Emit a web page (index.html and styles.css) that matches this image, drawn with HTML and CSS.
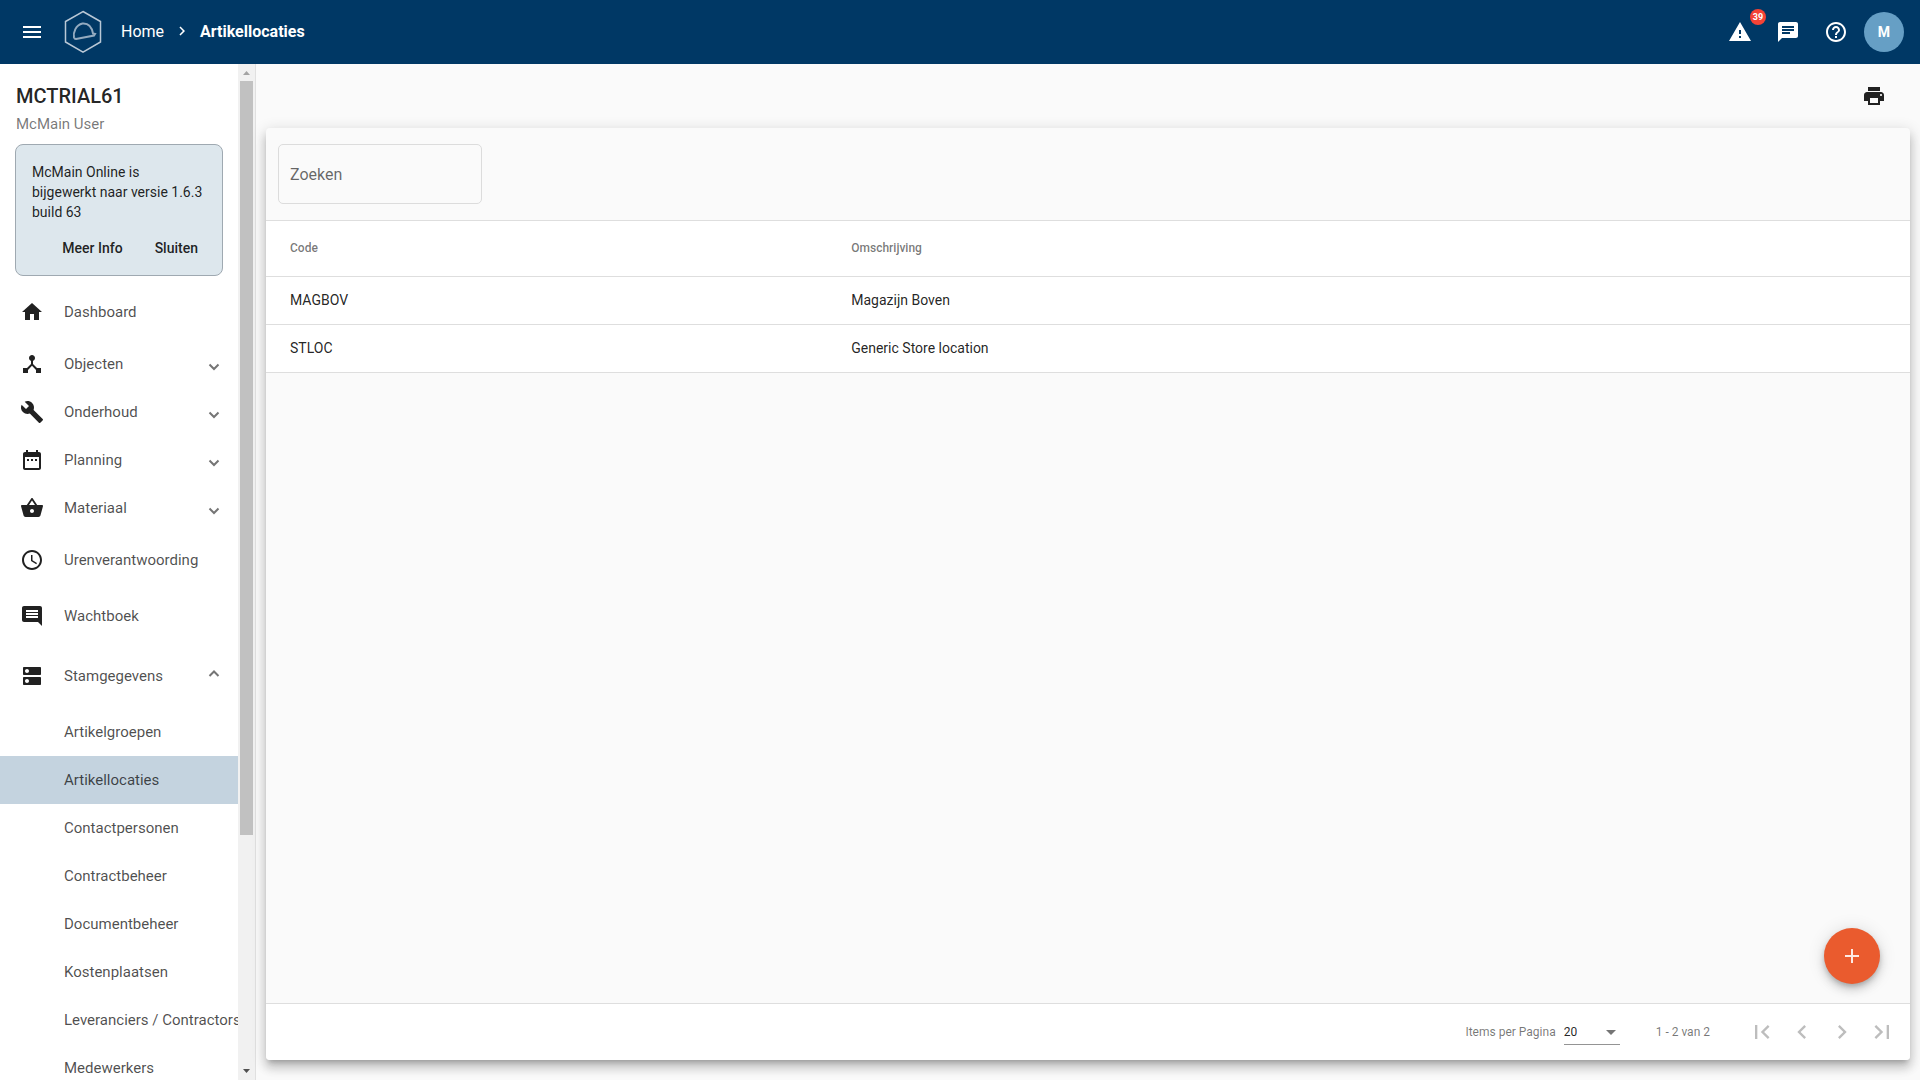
FILE: index.html
```html
<!DOCTYPE html>
<html lang="nl">
  <head>
    <meta charset="utf-8">
    <meta name="viewport" content="width=device-width, initial-scale=1">
    <title>Artikellocaties</title>
    <link rel="stylesheet" href="styles.css">
  </head>
  <body>
    <header class="topbar">
      <button class="icon-btn" type="button" aria-label="Menu">
        <svg class="icon" viewBox="0 0 24 24"><path d="M3 18h18v-2H3v2zm0-5h18v-2H3v2zm0-7v2h18V6H3z"/></svg>
      </button>
      <a class="logo" href="#" aria-label="McMain">
        <svg viewBox="0 0 38 44">
          <path d="M19 1.500L36.500 11.500V32L19 42.200L1.500 32V11.500Z"/>
          <path class="helmet" d="M10 27.500C9 23 11.500 15 18.500 13.500C25 13 28 18 29 23.500L31 24L30 25.500L12 29Q10.500 29 10 27.500Z"/>
        </svg>
      </a>
      <nav class="crumbs">
        <a href="#">Home</a>
        <svg class="icon crumb-sep" viewBox="0 0 24 24"><path d="M10 6L8.590 7.410 13.170 12l-4.580 4.590L10 18l6-6z"/></svg>
        <a class="current" href="#">Artikellocaties</a>
      </nav>
      <div class="actions">
        <button class="icon-btn" type="button" aria-label="Meldingen">
          <svg class="icon" viewBox="0 0 24 24"><path d="M1 21h22L12 2 1 21zm12-3h-2v-2h2v2zm0-4h-2v-4h2v4z"/></svg>
          <span class="badge">39</span>
        </button>
        <button class="icon-btn" type="button" aria-label="Berichten">
          <svg class="icon" viewBox="0 0 24 24"><path d="M20 2H4c-1.100 0-1.990.9-1.990 2L2 22l4-4h14c1.100 0 2-.9 2-2V4c0-1.100-.9-2-2-2zM6 9h12v2H6V9zm8 5H6v-2h8v2zm4-6H6V6h12v2z"/></svg>
        </button>
        <button class="icon-btn" type="button" aria-label="Help">
          <svg class="icon" viewBox="0 0 24 24"><path d="M11 18h2v-2h-2v2zm1-16C6.480 2 2 6.480 2 12s4.480 10 10 10 10-4.480 10-10S17.520 2 12 2zm0 18c-4.410 0-8-3.590-8-8s3.590-8 8-8 8 3.590 8 8-3.590 8-8 8zm0-14c-2.210 0-4 1.790-4 4h2c0-1.100.9-2 2-2s2 .9 2 2c0 2-3 1.750-3 5h2c0-2.250 3-2.500 3-5 0-2.210-1.790-4-4-4z"/></svg>
        </button>
        <button class="avatar" type="button">M</button>
      </div>
    </header>

    <div class="layout">
      <aside class="sidebar">
        <div class="side-content">
          <div class="user">
            <h1>MCTRIAL61</h1>
            <p>McMain User</p>
          </div>
          <div class="notice">
            <p>McMain Online is bijgewerkt naar versie 1.6.3 build 63</p>
            <div class="notice-actions">
              <button type="button">Meer Info</button>
              <button type="button">Sluiten</button>
            </div>
          </div>
          <nav class="menu">
            <a class="item tall" href="#">
              <svg class="icon" viewBox="0 0 24 24"><path d="M10 20v-6h4v6h5v-8h3L12 3 2 12h3v8z"/></svg>
              <span>Dashboard</span>
            </a>
            <a class="item" href="#">
              <svg class="icon" viewBox="0 0 24 24"><path d="M17 16l-4-4V8.820C14.160 8.400 15 7.300 15 6c0-1.660-1.340-3-3-3S9 4.340 9 6c0 1.300.84 2.400 2 2.820V12l-4 4H3v5h5v-3.050l4-4.200 4 4.200V21h5v-5h-4z"/></svg>
              <span>Objecten</span>
              <svg class="arrow" viewBox="0 0 12 12"><path d="M1.500 3.500L6 8l4.500-4.500"/></svg>
            </a>
            <a class="item" href="#">
              <svg class="icon" viewBox="0 0 24 24"><path d="M22.700 19l-9.100-9.100c.9-2.300.4-5-1.500-6.900-2-2-5-2.400-7.400-1.300L9 6 6 9 1.600 4.700C.4 7.100.9 10.100 2.900 12.100c1.900 1.900 4.600 2.400 6.900 1.500l9.100 9.100c.4.4 1 .4 1.400 0l2.300-2.300c.5-.4.5-1.100.1-1.400z"/></svg>
              <span>Onderhoud</span>
              <svg class="arrow" viewBox="0 0 12 12"><path d="M1.500 3.500L6 8l4.500-4.500"/></svg>
            </a>
            <a class="item" href="#">
              <svg class="icon" viewBox="0 0 24 24"><path d="M9 11H7v2h2v-2zm4 0h-2v2h2v-2zm4 0h-2v2h2v-2zm2-7h-1V2h-2v2H8V2H6v2H5c-1.110 0-1.990.9-1.990 2L3 20c0 1.100.89 2 2 2h14c1.100 0 2-.9 2-2V6c0-1.100-.9-2-2-2zm0 16H5V9h14v11z"/></svg>
              <span>Planning</span>
              <svg class="arrow" viewBox="0 0 12 12"><path d="M1.500 3.500L6 8l4.500-4.500"/></svg>
            </a>
            <a class="item" href="#">
              <svg class="icon" viewBox="0 0 24 24"><path d="M17.210 9l-4.380-6.560c-.19-.28-.51-.42-.83-.42-.32 0-.64.14-.83.430L6.790 9H2c-.55 0-1 .45-1 1 0 .09.010.18.040.270l2.540 9.270c.23.840 1 1.460 1.920 1.460h13c.92 0 1.690-.62 1.930-1.460l2.540-9.270L23 10c0-.55-.45-1-1-1h-4.790zM9 9l3-4.400L15 9H9zm3 8c-1.100 0-2-.9-2-2s.9-2 2-2 2 .9 2 2-.9 2-2 2z"/></svg>
              <span>Materiaal</span>
              <svg class="arrow" viewBox="0 0 12 12"><path d="M1.500 3.500L6 8l4.500-4.500"/></svg>
            </a>
            <a class="item tall" href="#">
              <svg class="icon" viewBox="0 0 24 24"><path d="M11.990 2C6.470 2 2 6.480 2 12s4.470 10 9.990 10C17.520 22 22 17.520 22 12S17.520 2 11.990 2zM12 20c-4.420 0-8-3.580-8-8s3.580-8 8-8 8 3.580 8 8-3.580 8-8 8z"/><path d="M12.500 7H11v6l5.250 3.150.75-1.230-4.500-2.670z"/></svg>
              <span>Urenverantwoording</span>
            </a>
            <a class="item tall" href="#">
              <svg class="icon" viewBox="0 0 24 24"><path d="M21.990 4c0-1.100-.89-2-1.990-2H4c-1.100 0-2 .9-2 2v12c0 1.100.9 2 2 2h14l4 4-.01-18zM18 14H6v-2h12v2zm0-3H6V9h12v2zm0-3H6V6h12v2z"/></svg>
              <span>Wachtboek</span>
            </a>
            <a class="item open" href="#">
              <svg class="icon" viewBox="0 0 24 24"><path d="M20 13H4c-.55 0-1 .45-1 1v6c0 .55.45 1 1 1h16c.55 0 1-.45 1-1v-6c0-.55-.45-1-1-1zM7 19c-1.100 0-2-.9-2-2s.9-2 2-2 2 .9 2 2-.9 2-2 2zM20 3H4c-.55 0-1 .45-1 1v6c0 .55.45 1 1 1h16c.55 0 1-.45 1-1V4c0-.55-.45-1-1-1zM7 9c-1.100 0-2-.9-2-2s.9-2 2-2 2 .9 2 2-.9 2-2 2z"/></svg>
              <span>Stamgegevens</span>
              <svg class="arrow" viewBox="0 0 12 12"><path d="M1.500 8L6 3.500 10.500 8"/></svg>
            </a>
            <a class="item sub" href="#">Artikelgroepen</a>
            <a class="item sub active" href="#">Artikellocaties</a>
            <a class="item sub" href="#">Contactpersonen</a>
            <a class="item sub" href="#">Contractbeheer</a>
            <a class="item sub" href="#">Documentbeheer</a>
            <a class="item sub" href="#">Kostenplaatsen</a>
            <a class="item sub" href="#">Leveranciers / Contractors</a>
            <a class="item sub" href="#">Medewerkers</a>
          </nav>
        </div>
        <div class="scrollbar" aria-hidden="true">
          <svg class="up" viewBox="0 0 17 17"><path d="M5 11h7L8.500 7z"/></svg>
          <div class="track"><div class="thumb"></div></div>
          <svg class="down" viewBox="0 0 17 17"><path d="M5 6h7L8.500 10z"/></svg>
        </div>
      </aside>

      <main class="main">
        <div class="toolbar">
          <button class="icon-btn" type="button" aria-label="Afdrukken">
            <svg class="icon" viewBox="0 0 24 24"><path d="M19 8H5c-1.660 0-3 1.340-3 3v6h4v4h12v-4h4v-6c0-1.660-1.340-3-3-3zm-3 11H8v-5h8v5zm3-7c-.55 0-1-.45-1-1s.45-1 1-1 1 .45 1 1-.45 1-1 1zm-1-9H6v4h12V3z"/></svg>
          </button>
        </div>
        <section class="card">
          <div class="filter">
            <input class="search" type="text" placeholder="Zoeken" aria-label="Zoeken">
          </div>
          <div class="table-area">
            <table>
              <thead>
                <tr><th>Code</th><th>Omschrijving</th></tr>
              </thead>
              <tbody>
                <tr><td>MAGBOV</td><td>Magazijn Boven</td></tr>
                <tr><td>STLOC</td><td>Generic Store location</td></tr>
              </tbody>
            </table>
            <button class="fab" type="button" aria-label="Toevoegen">
              <svg class="icon" viewBox="0 0 24 24"><path d="M19 13h-6v6h-2v-6H5v-2h6V5h2v6h6v2z"/></svg>
            </button>
          </div>
          <footer class="paginator">
            <label for="page-size">Items per Pagina</label>
            <div class="select">
              <select id="page-size">
                <option>20</option>
              </select>
              <svg class="caret" viewBox="0 0 10 5"><path d="M0 0h10L5 5z"/></svg>
            </div>
            <span class="range">1 - 2 van 2</span>
            <div class="pages">
              <button type="button" aria-label="Eerste pagina" disabled><svg viewBox="0 0 24 24"><path d="M18.410 16.590L13.820 12l4.590-4.590L17 6l-6 6 6 6zM6 6h2v12H6z"/></svg></button>
              <button type="button" aria-label="Vorige pagina" disabled><svg viewBox="0 0 24 24"><path d="M15.410 7.410L14 6l-6 6 6 6 1.410-1.410L10.830 12z"/></svg></button>
              <button type="button" aria-label="Volgende pagina" disabled><svg viewBox="0 0 24 24"><path d="M10 6L8.590 7.410 13.170 12l-4.580 4.590L10 18l6-6z"/></svg></button>
              <button type="button" aria-label="Laatste pagina" disabled><svg viewBox="0 0 24 24"><path d="M5.590 7.410L10.180 12l-4.590 4.590L7 18l6-6-6-6zM16 6h2v12h-2z"/></svg></button>
            </div>
          </footer>
        </section>
      </main>
    </div>
  </body>
</html>
```

FILE: styles.css
```css
* {
  box-sizing: border-box;
}
body {
  margin: 0;
  height: 100vh;
  display: flex;
  flex-direction: column;
  font-family: Roboto, "Liberation Sans", sans-serif;
  font-size: 14px;
  color: rgba(0, 0, 0, 0.87);
  background-color: #fafafa;
}
button {
  font-family: inherit;
  border: none;
  padding: 0;
  background: none;
  color: inherit;
  cursor: pointer;
}
a {
  color: inherit;
  text-decoration: none;
}
.icon {
  width: 24px;
  height: 24px;
  fill: currentColor;
  display: block;
  flex: none;
}

/* top bar */
.topbar {
  display: flex;
  align-items: center;
  height: 64px;
  flex: none;
  padding: 0 16px 0 12px;
  background-color: #003865;
  color: #fff;
}
.icon-btn {
  position: relative;
  width: 40px;
  height: 40px;
  display: flex;
  align-items: center;
  justify-content: center;
}
.logo svg {
  display: block;
  width: 38px;
  height: 44px;
  fill: none;
  stroke: #b9c8d6;
  stroke-width: 1.5;
}
.logo {
  margin: 0 19px 0 12px;
}
.logo .helmet {
  stroke: #94abc0;
  stroke-width: 2;
}
.crumbs {
  display: flex;
  align-items: center;
  gap: 9px;
  padding-bottom: 2px;
  font-size: 16px;
}
.crumb-sep {
  width: 18px;
  height: 18px;
}
.crumbs .current {
  font-weight: 700;
}
.actions {
  display: flex;
  align-items: center;
  gap: 8px;
  margin-left: auto;
}
.badge {
  position: absolute;
  top: -3px;
  right: -6px;
  width: 16px;
  height: 16px;
  border-radius: 50%;
  background-color: #f44336;
  font-size: 9px;
  font-weight: 700;
  line-height: 16px;
  text-align: center;
}
.avatar {
  width: 40px;
  height: 40px;
  border-radius: 50%;
  background-color: #669fc5;
  color: #fff;
  font-size: 14px;
  font-weight: 700;
}

.layout {
  display: flex;
  flex: 1;
  min-height: 0;
}

/* side menu */
.sidebar {
  display: flex;
  width: 256px;
  flex: none;
  background-color: #fff;
  border-right: 1px solid #e0e0e0;
}
.side-content {
  flex: 1;
  min-width: 0;
  overflow: hidden;
}
.user {
  padding: 20px 16px 0;
}
.user h1 {
  margin: 0;
  font-size: 20px;
  font-weight: 500;
  line-height: 24px;
}
.user p {
  margin: 4px 0 0;
  font-size: 15px;
  line-height: 24px;
  color: rgba(0, 0, 0, 0.54);
}
.notice {
  margin: 8px 15px;
  padding: 17px 8px 9px 16px;
  border: 1px solid #9fa9b1;
  border-radius: 8px;
  background-color: #dde7ed;
}
.notice p {
  margin: 0;
  padding-right: 8px;
  line-height: 20px;
}
.notice-actions {
  display: flex;
  justify-content: flex-end;
  margin-top: 8px;
}
.notice-actions button {
  height: 36px;
  padding: 0 16px;
  font-size: 14px;
  font-weight: 500;
}
.item {
  display: flex;
  align-items: center;
  height: 48px;
  padding: 0 16px 0 20px;
  font-size: 15px;
  white-space: nowrap;
}
.item span {
  margin-left: 20px;
  color: rgba(0, 0, 0, 0.7);
}
.item.tall {
  height: 56px;
}
.item.open {
  height: 64px;
}
.item.sub {
  padding-left: 64px;
  color: rgba(0, 0, 0, 0.7);
}
.item.active {
  background-color: #c4d3df;
}
.arrow {
  width: 12px;
  height: 12px;
  margin: 5px 2px 0 auto;
  fill: none;
  stroke: #757575;
  stroke-width: 2;
}
.item.open .arrow {
  margin: 0 2px 5px auto;
}
.scrollbar {
  display: flex;
  flex-direction: column;
  width: 17px;
  background-color: #f1f1f1;
}
.scrollbar svg {
  width: 17px;
  height: 17px;
}
.scrollbar .up {
  fill: #a3a3a3;
}
.scrollbar .down {
  fill: #505050;
}
.track {
  flex: 1;
  padding: 0 2px;
}
.thumb {
  height: 76.8%;
  background-color: #c1c1c1;
}

/* content */
.main {
  flex: 1;
  min-width: 0;
  display: flex;
  flex-direction: column;
  padding: 0 10px 20px;
}
.toolbar {
  display: flex;
  justify-content: flex-end;
  padding: 12px 16px;
}
.card {
  flex: 1;
  display: flex;
  flex-direction: column;
  border-radius: 4px;
  background-color: #fafafa;
  box-shadow: 0 5px 5px -3px rgba(0, 0, 0, 0.2), 0 8px 10px 1px rgba(0, 0, 0, 0.14), 0 3px 14px 2px rgba(0, 0, 0, 0.12);
}
.filter {
  padding: 16px 12px;
}
.search {
  display: block;
  width: 204px;
  height: 60px;
  padding: 0 11px;
  border: 1px solid #dcdcdc;
  border-radius: 5px;
  background: none;
  font-family: inherit;
  font-size: 16px;
}
.search::placeholder {
  color: rgba(0, 0, 0, 0.6);
}
.table-area {
  position: relative;
  flex: 1;
  border-top: 1px solid #dedede;
}
table {
  width: 100%;
  border-collapse: separate;
  border-spacing: 0;
  background-color: #fff;
}
th,
td {
  height: 48px;
  padding: 0 0 2px;
  border-bottom: 1px solid #dedede;
  text-align: left;
}
th {
  height: 56px;
  font-size: 12px;
  font-weight: 500;
  color: rgba(0, 0, 0, 0.54);
}
th:first-child,
td:first-child {
  width: 35.6%;
  padding-left: 24px;
}
.fab {
  position: absolute;
  right: 30px;
  bottom: 19px;
  width: 56px;
  height: 56px;
  display: flex;
  align-items: center;
  justify-content: center;
  border-radius: 50%;
  background-color: #ea5b2e;
  color: rgba(255, 255, 255, 0.87);
  box-shadow: 0 3px 5px -1px rgba(0, 0, 0, 0.2), 0 6px 10px 0 rgba(0, 0, 0, 0.14), 0 1px 18px 0 rgba(0, 0, 0, 0.12);
}
.paginator {
  display: flex;
  align-items: center;
  justify-content: flex-end;
  height: 57px;
  padding-right: 8px;
  border-top: 1px solid #dedede;
  border-radius: 0 0 4px 4px;
  background-color: #fff;
  font-size: 12px;
  color: rgba(0, 0, 0, 0.54);
}
.select {
  position: relative;
  width: 56px;
  margin-left: 8px;
}
.select select {
  display: block;
  width: 100%;
  height: 26px;
  padding: 0;
  appearance: none;
  border: none;
  border-bottom: 1px solid #949494;
  border-radius: 0;
  background: none;
  font-family: inherit;
  font-size: 12px;
  color: rgba(0, 0, 0, 0.87);
}
.caret {
  position: absolute;
  top: 11px;
  right: 4px;
  width: 10px;
  height: 5px;
  fill: #757575;
}
.range {
  margin: 0 32px 0 36px;
}
.pages {
  display: flex;
}
.pages button {
  width: 40px;
  height: 40px;
  display: flex;
  align-items: center;
  justify-content: center;
}
.pages svg {
  width: 28px;
  height: 28px;
  fill: #bdbdbd;
}
```
